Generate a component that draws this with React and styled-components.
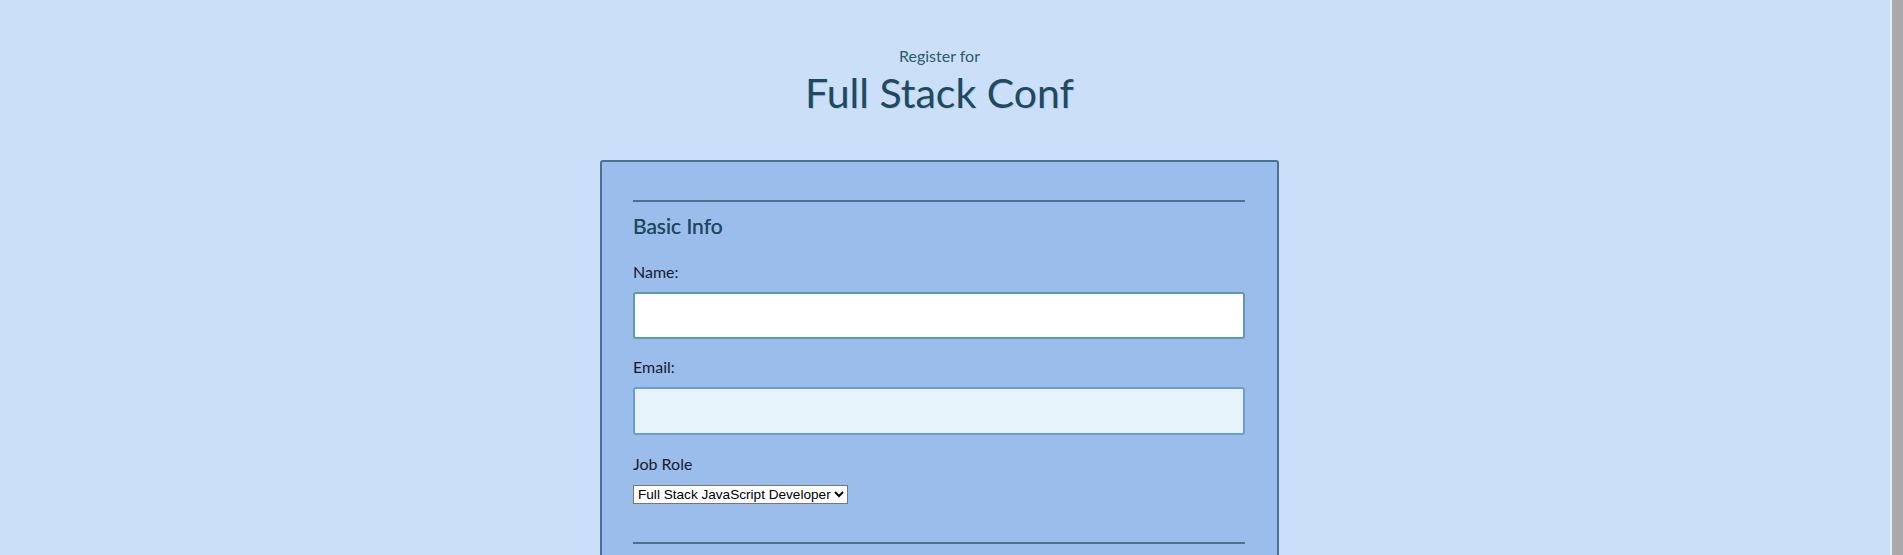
import React from 'react';
import styled, { createGlobalStyle } from 'styled-components';

const GlobalStyle = createGlobalStyle`
  body {
    margin: 0;
    background: #cbdff9;
    font-family: Lato, "Noto Sans", sans-serif;
    color: #1e4a5f;
  }
`;

function App() {
  return (
    <>
      <GlobalStyle />
      <Page>
        <Header>
          <Kicker>Register for</Kicker>
          <Title>Full Stack Conf</Title>
        </Header>
        <Form>
          <Fieldset>
            <Legend>Basic Info</Legend>
            <Label htmlFor="name">Name:</Label>
            <TextInput id="name" type="text" />
            <Label htmlFor="mail">Email:</Label>
            <TextInput id="mail" type="email" focused />
            <Label htmlFor="title">Job Role</Label>
            <Select id="title" defaultValue="full-stack">
              <option value="full-stack">Full Stack JavaScript Developer</option>
              <option value="front-end">Front End Developer</option>
              <option value="back-end">Back End Developer</option>
              <option value="designer">Designer</option>
              <option value="other">Other</option>
            </Select>
          </Fieldset>
          <Fieldset last />
        </Form>
      </Page>
      <Scrollbar />
    </>
  );
}

const Page = styled.div`
  display: flex;
  flex-direction: column;
  align-items: center;
  padding: 0 24px 40px 0;
`

const Header = styled.header`
  display: flex;
  flex-direction: column;
  align-items: center;
  padding-top: 46px;
`

const Kicker = styled.span`
  font-size: 16px;
  color: #2c5a6f;
  line-height: 20px;
`

const Title = styled.h1`
  margin: 3px 0 0;
  font-size: 41px;
  font-weight: 400;
  line-height: 48px;
  color: #1e4a5f;
  text-shadow: 1px 1px 0 rgba(30, 74, 95, 0.15);
`

const Form = styled.form`
  box-sizing: border-box;
  width: 679px;
  margin-top: 43px;
  padding: 0 32px 0 31px;
  background: #9bbdec;
  border: 2px solid #4a7192;
  border-radius: 3px;
`

const Fieldset = styled.fieldset`
  display: flex;
  flex-direction: column;
  align-items: flex-start;
  margin: ${p => (p.last ? '0' : '38px 0 0')};
  padding: 0 0 ${p => (p.last ? '120px' : '38px')};
  border: none;
  border-top: 2px solid #4a7192;
  min-width: 0;
`

const Legend = styled.h2`
  margin: 10px 0 22px;
  font-size: 21px;
  font-weight: 400;
  line-height: 28px;
  color: #1e4a5f;
  text-shadow: 0 0 0.4px #1e4a5f;
`

const Label = styled.label`
  font-size: 16px;
  line-height: 20px;
  color: #1a1a2e;
  margin-bottom: 10px;
`

const TextInput = styled.input`
  box-sizing: border-box;
  width: 100%;
  height: ${p => (p.focused ? '48px' : '47px')};
  margin: 0 0 ${p => (p.focused ? '19px' : '18px')};
  padding: 0 10px;
  font-size: 16px;
  background: ${p => (p.focused ? '#e8f4fb' : '#ffffff')};
  border: 2px solid ${p => (p.focused ? '#6a9bdb' : '#5d9cad')};
  border-radius: 3px;
  outline: none;
`

const Select = styled.select`
  margin-top: 1px;
  font-family: "Liberation Sans", Arial, sans-serif;
  font-size: 13.6px;
  height: 19px;
  color: #000;
  background: #fff;
  border: 1px solid #767676;
  border-radius: 0;
`

/* window scrollbar, drawn over the page edge */
const Scrollbar = styled.div`
  position: fixed;
  top: 0;
  right: 0;
  bottom: 0;
  width: 11px;
  background: #a9a9a9;
  border-left: 2px solid #e4edf9;
`

export default App;
